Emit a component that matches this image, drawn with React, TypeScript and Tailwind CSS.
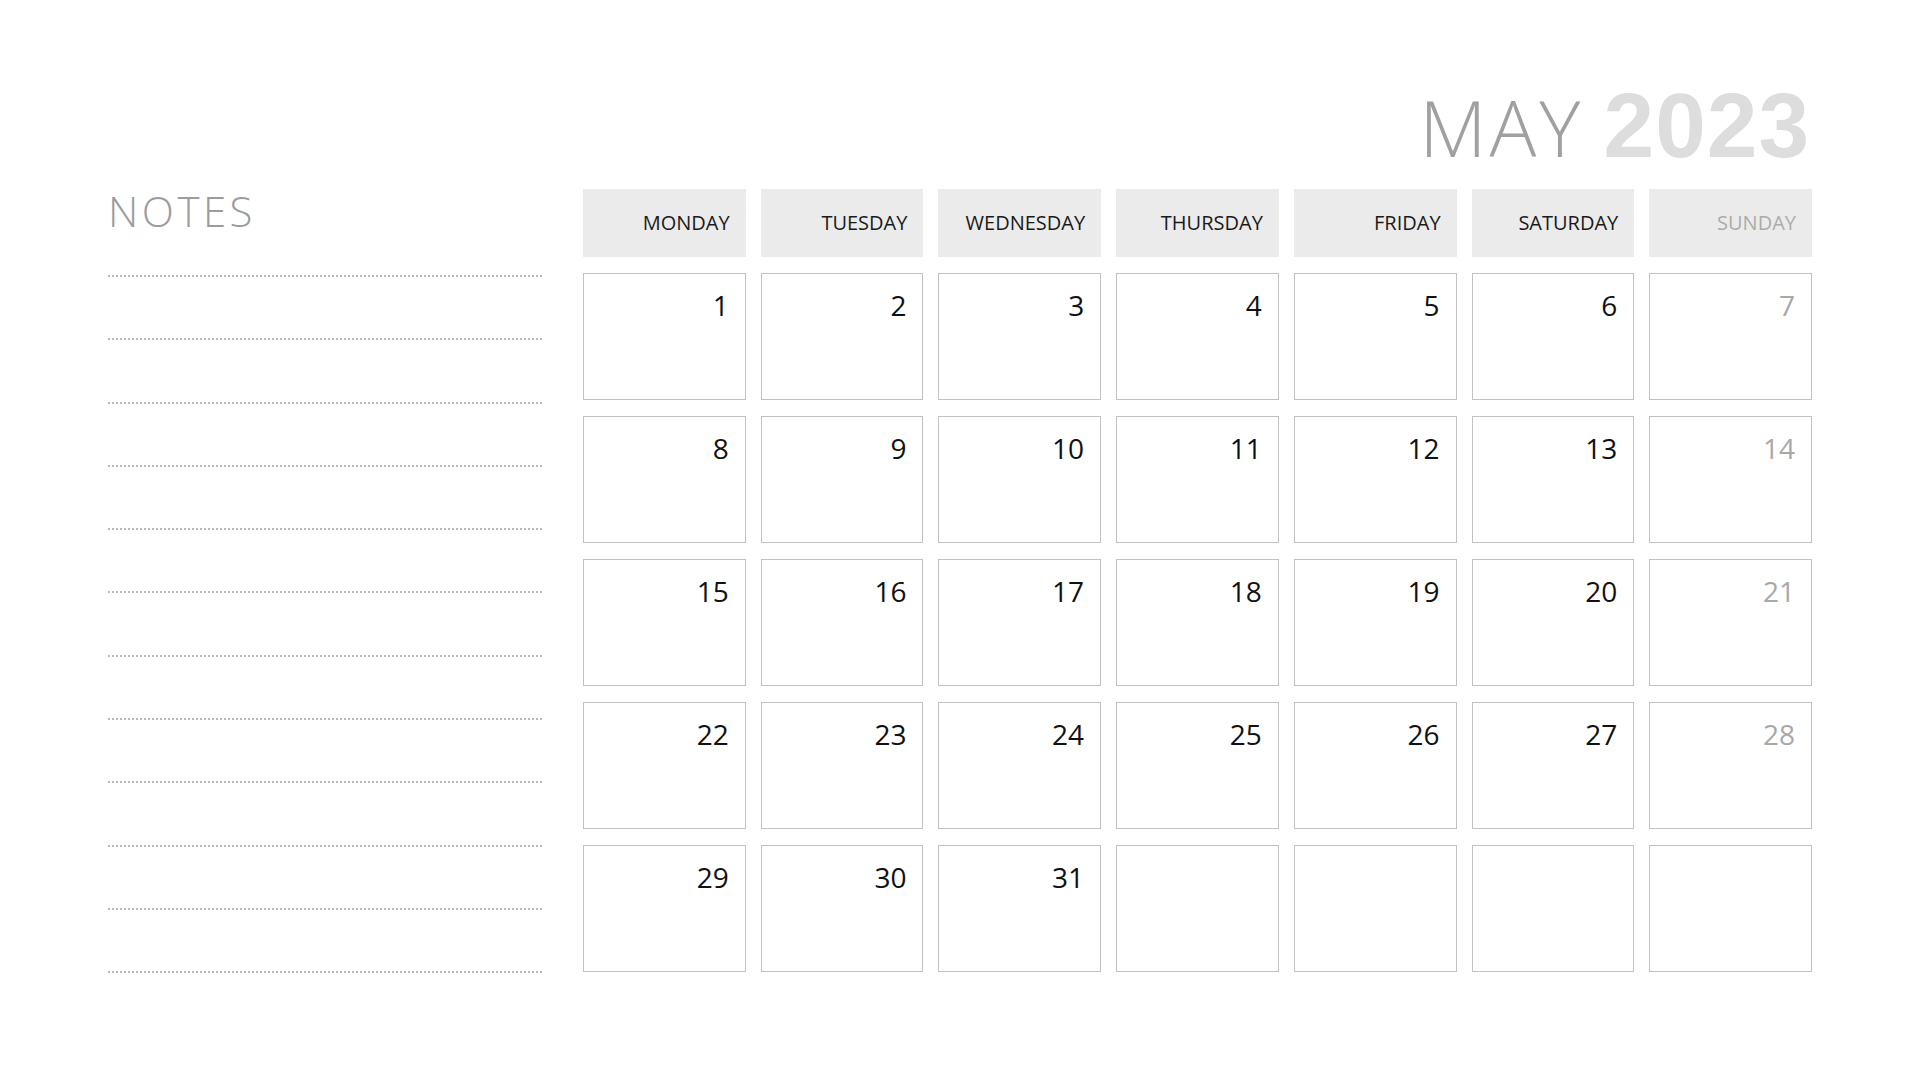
import React from 'react';

const DAYS = ['MONDAY', 'TUESDAY', 'WEDNESDAY', 'THURSDAY', 'FRIDAY', 'SATURDAY', 'SUNDAY'];

// May 2023 starts on a Monday
const CELLS: (number | null)[] = Array.from({ length: 35 }, (_, i) => (i < 31 ? i + 1 : null));

const NOTE_LINES = Array.from({ length: 12 }, (_, i) => i);

function DayHeader({ name, index }: { name: string; index: number }) {
  const isSunday = index === 6;
  return (
    <div
      className={`flex h-[68px] items-center justify-end bg-[#ebebeb] pr-4 text-[20px] leading-none ${
        isSunday ? 'text-[#ababab]' : 'text-[#1a1a1a]'
      }`}
    >
      {name}
    </div>
  );
}

function DayCell({ day, index }: { day: number | null; index: number }) {
  const isSunday = index % 7 === 6;
  return (
    <div className="flex h-[127px] justify-end border border-[#c2c2c2] bg-white pr-4 pt-[17px]">
      {day !== null && (
        <span className={`text-[28px] leading-none ${isSunday ? 'text-[#a8a8a8]' : 'text-[#111111]'}`}>
          {day}
        </span>
      )}
    </div>
  );
}

export default function App() {
  return (
    <div
      className="flex h-[1080px] w-[1920px] bg-white"
      style={{ fontFamily: '"Open Sans", "Liberation Sans", sans-serif' }}
    >
      {/* Notes column */}
      <div className="ml-[108px] w-[435px] pt-[190px]">
        <div className="text-[42px] font-light leading-none tracking-[3.5px] text-[#9c9c9c]">NOTES</div>
        <div className="mt-[43px] flex flex-col gap-[61.3px]">
          {NOTE_LINES.map((i) => (
            <div
              key={i}
              className="h-[2px] w-full bg-[linear-gradient(to_right,#b8b8b8_2px,transparent_2px)] bg-[length:4px_2px]"
            />
          ))}
        </div>
      </div>

      {/* Calendar */}
      <div className="ml-[40px] w-[1229px] pt-[80px]">
        <div className="flex items-baseline justify-end gap-[20px] pr-[2px] leading-none">
          <span className="text-[78px] font-light tracking-[3px] text-[#a0a0a0]">MAY</span>
          <span
            className="text-[91px] font-bold tracking-[1px] text-[#dddddd]"
            style={{ fontFamily: '"Liberation Sans", Arial, sans-serif' }}
          >
            2023
          </span>
        </div>

        <div className="mt-[18px] grid grid-cols-7 gap-x-[15px]">
          {DAYS.map((d, i) => (
            <DayHeader key={d} name={d} index={i} />
          ))}
        </div>

        <div className="mt-4 grid grid-cols-7 gap-x-[15px] gap-y-4">
          {CELLS.map((day, i) => (
            <DayCell key={i} day={day} index={i} />
          ))}
        </div>
      </div>
    </div>
  );
}
